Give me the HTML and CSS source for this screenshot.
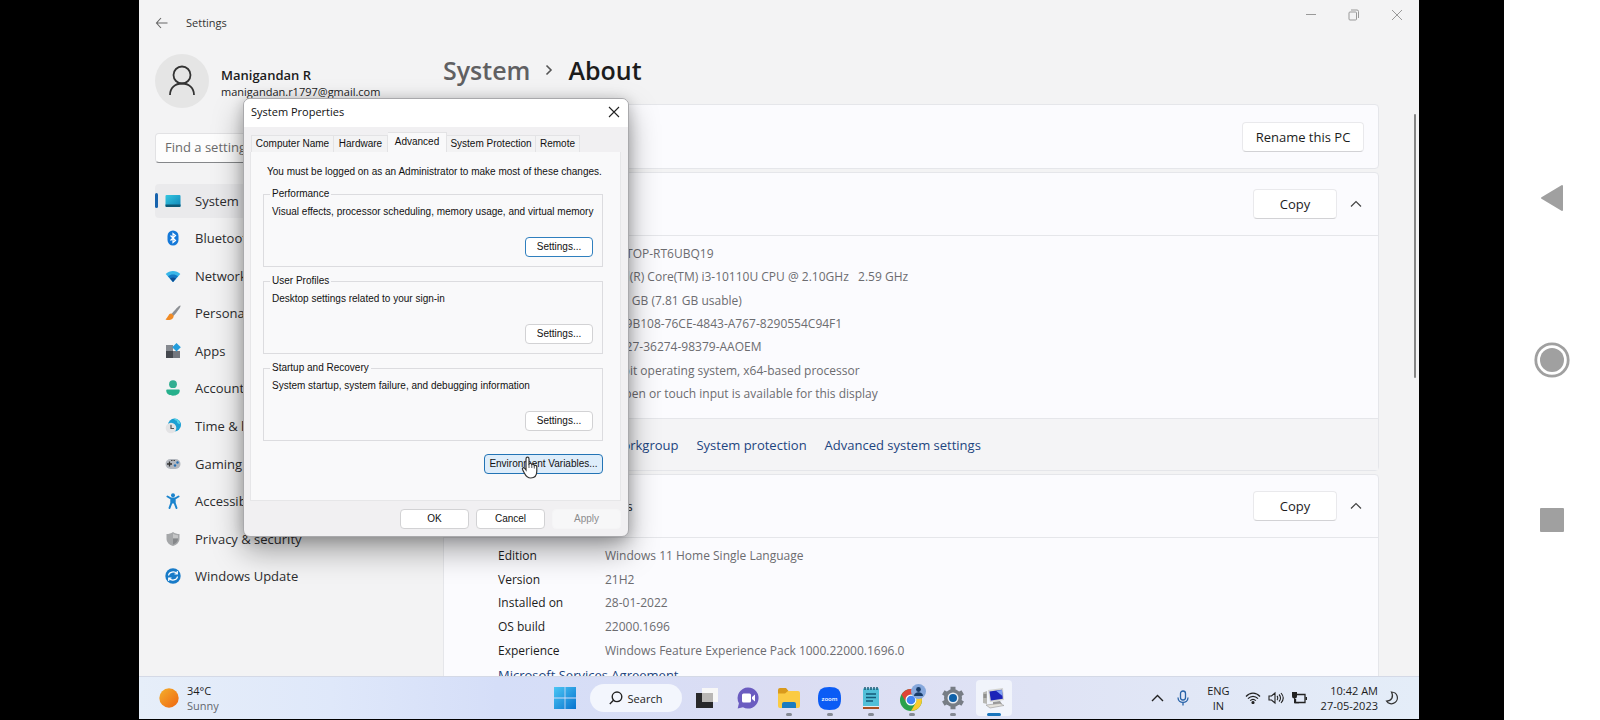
FILE: index.html
```
<!DOCTYPE html>
<html lang="en">
<head>
<meta charset="utf-8">
<title>Settings - System - About</title>
<link rel="stylesheet" href="styles.css">
</head>
<body>
<div class="stage">
  <main class="screen">
    <section class="settings">
      <header class="titlebar">
        <button class="icon-btn" aria-label="Back"><svg width="14" height="12" viewBox="0 0 14 12"><path d="M6 1 1.500 6 6 11M1.500 6H12.500" fill="none" stroke="#666" stroke-width="1.100"/></svg></button>
        <span class="app-name">Settings</span>
        <div class="window-controls">
          <button class="icon-btn" aria-label="Minimize"><svg width="12" height="12" viewBox="0 0 12 12"><path d="M1 5.500h10" stroke="#999"/></svg></button>
          <button class="icon-btn" aria-label="Restore"><svg width="12" height="12" viewBox="0 0 12 12" fill="none" stroke="#999"><rect x="1" y="3" width="7.500" height="8" rx="1"/><path d="M3 1h6a1.500 1.500 0 0 1 1.500 1.500V9"/></svg></button>
          <button class="icon-btn" aria-label="Close"><svg width="12" height="12" viewBox="0 0 12 12"><path d="m1 1 10 10M11 1 1 11" stroke="#999"/></svg></button>
        </div>
      </header>

      <div class="columns">
        <aside class="sidebar">
          <div class="account">
            <div class="avatar"><svg width="28" height="32" viewBox="0 0 28 32" fill="none" stroke="#333" stroke-width="1.800"><circle cx="14" cy="10" r="8.500"/><path d="M2 30c0-7 5-11.500 12-11.500S26 23 26 30"/></svg></div>
            <div>
              <div class="account-name">Manigandan R</div>
              <div class="account-mail">manigandan.r1797@gmail.com</div>
            </div>
          </div>
          <input class="search" type="text" placeholder="Find a setting" aria-label="Find a setting">
          <nav class="nav">
            <a class="nav-item active" href="#"><svg class="nav-icon" viewBox="0 0 16 16"><defs><linearGradient id="sys" x1="0" y1="0" x2="1" y2="1"><stop offset="0" stop-color="#35c7e0"/><stop offset="1" stop-color="#0d84b8"/></linearGradient></defs><rect x="0.500" y="2" width="15" height="12" rx="1" fill="url(#sys)"/><path d="M.5 11.500h15V13a1 1 0 0 1-1 1h-13a1 1 0 0 1-1-1z" fill="#0c5876"/></svg>System</a>
            <a class="nav-item" href="#"><svg class="nav-icon" viewBox="0 0 16 16"><rect x="2.500" y="0.500" width="11" height="15" rx="5.500" fill="#1478d8"/><path d="m5.500 5.500 5 5L8 12.500v-9l2.500 2-5 5" fill="none" stroke="#fff" stroke-width="1.200"/></svg>Bluetooth &amp; devices</a>
            <a class="nav-item" href="#"><svg class="nav-icon" viewBox="0 0 16 16"><path d="M8 14 .7 6C4.500 2 11.500 2 15.300 6z" fill="#38b6e8"/><path d="M8 14 3 8.300c3-2.500 7-2.500 10 0z" fill="#1378c4"/><path d="m8 14-3-3.400c2-1.600 4-1.600 6 0z" fill="#0c4e94"/></svg>Network &amp; internet</a>
            <a class="nav-item" href="#"><svg class="nav-icon" viewBox="0 0 16 16"><path d="M15.500.5c-1.500-.5-5.500 4.500-9 8.500l2 2c3.500-4 7.500-9 7-10.500z" fill="#8c8f94"/><path d="M6.500 8.500C3.500 8 3.500 12 .5 14.500c3 1.300 8 .8 8.200-3.700z" fill="#f08a24"/></svg>Personalization</a>
            <a class="nav-item" href="#"><svg class="nav-icon" viewBox="0 0 16 16"><path d="M1 2h7v6H1z" fill="#85898f"/><path d="M1 8h7v7H1z" fill="#44484e"/><path d="M8 8h7v7H8z" fill="#73777e"/><path d="m11.500 0 4.300 4.200-4.300 4.300-4.300-4.300z" fill="#249ddb"/></svg>Apps</a>
            <a class="nav-item" href="#"><svg class="nav-icon" viewBox="0 0 16 16"><circle cx="8" cy="4.200" r="3.900" fill="#32ae91"/><path d="M2 9.500h12c.8 0 .8 1 .7 1.800-.4 3-3.700 4.400-6.700 4.400s-6.300-1.400-6.700-4.400c-.1-.8-.1-1.800.7-1.800z" fill="#26b08c"/></svg>Accounts</a>
            <a class="nav-item" href="#"><svg class="nav-icon" viewBox="0 0 16 16"><circle cx="9.500" cy="7" r="6.500" fill="#1a9fd3"/><path d="M9 1c3-1 6 2 6 5-2 0-3-1-3-2.500S10 3 9 1z" fill="#55d2e5"/><circle cx="6" cy="10" r="5.300" fill="#e3e3e5"/><path d="M6 6.800V10.500h3" fill="none" stroke="#555" stroke-width="1.200"/></svg>Time &amp; language</a>
            <a class="nav-item" href="#"><svg class="nav-icon" viewBox="0 0 16 16"><rect x=".5" y="3" width="15" height="10" rx="5" fill="#b3b7be"/><path d="M4.500 5.500v5M2 8h5" stroke="#333" stroke-width="1.300"/><circle cx="10" cy="9.500" r="1.200" fill="#246fb5"/><circle cx="12.500" cy="6.500" r="1.200" fill="#246fb5"/><path d="M6 4.500h1.500M8.500 4.500H10" stroke="#444"/></svg>Gaming</a>
            <a class="nav-item" href="#"><svg class="nav-icon" viewBox="0 0 16 16"><circle cx="8" cy="2.200" r="2" fill="#1c84cd"/><path d="M2.500 3.500 6 5.500h4l3.500-2M8 5.500v4M6.300 5.500v4.500L4.500 15M9.700 5.500v4.500l1.800 5" fill="none" stroke="#1c84cd" stroke-width="2" stroke-linecap="round"/></svg>Accessibility</a>
            <a class="nav-item" href="#"><svg class="nav-icon" viewBox="0 0 16 16"><path d="M8 1c2 1.500 4 2 6.500 2v4.500c0 4-3 6.500-6.500 7.500C4.500 14 1.500 11.500 1.500 7.500V3C4 3 6 2.500 8 1z" fill="#a5a7a9"/><path d="M8 2.500c1.500 1 3 1.500 5 1.700V7.500H8z" fill="#c4c5c6"/><path d="M8 7.500h5c0 3-2 5-5 6z" fill="#85878a"/></svg>Privacy &amp; security</a>
            <a class="nav-item" href="#"><svg class="nav-icon" viewBox="0 0 16 16"><circle cx="8" cy="8" r="7.700" fill="#187bc8"/><path d="M3.500 7.500C4 3.500 9.500 3 12 5.500M12.300 3v3H9.500M12.500 8.500C12 12.500 6.500 13 4 10.500M3.700 13v-3h2.800" fill="none" stroke="#fff" stroke-width="1.200"/></svg>Windows Update</a>
          </nav>
        </aside>

        <div class="content">
          <h1 class="crumbs"><span class="crumb-parent">System</span><svg width="8" height="12" viewBox="0 0 8 12"><path d="m1.500 1.500 4.500 4.500-4.500 4.500" fill="none" stroke="#555" stroke-width="1.600"/></svg><span>About</span></h1>

          <section class="card">
            <div class="card-head"><span>LAPTOP-RT6UBQ19</span><button class="btn rename">Rename this PC</button></div>
          </section>

          <section class="card">
            <div class="card-head ruled"><span class="card-title">Device specifications</span><button class="btn copy">Copy</button><button class="icon-btn chevron" aria-label="Collapse"><svg width="12" height="8" viewBox="0 0 12 8"><path d="m1 6.500 5-5 5 5" fill="none" stroke="#444" stroke-width="1.200"/></svg></button></div>
            <dl class="specs device">
              <dt>Device name</dt><dd>LAPTOP-RT6UBQ19</dd>
              <dt>Processor</dt><dd>Intel(R) Core(TM) i3-10110U CPU @ 2.10GHz &nbsp; 2.59 GHz</dd>
              <dt>Installed RAM</dt><dd>8.00 GB (7.81 GB usable)</dd>
              <dt>Device ID</dt><dd>0009B108-76CE-4843-A767-8290554C94F1</dd>
              <dt>Product ID</dt><dd>00327-36274-98379-AAOEM</dd>
              <dt>System type</dt><dd>64-bit operating system, x64-based processor</dd>
              <dt>Pen and touch</dt><dd>No pen or touch input is available for this display</dd>
            </dl>
            <div class="related"><span>Related links</span><a href="#">Domain or workgroup</a><a href="#">System protection</a><a href="#">Advanced system settings</a></div>
          </section>

          <section class="card">
            <div class="card-head ruled"><span class="card-title">Windows specifications</span><button class="btn copy">Copy</button><button class="icon-btn chevron" aria-label="Collapse"><svg width="12" height="8" viewBox="0 0 12 8"><path d="m1 6.500 5-5 5 5" fill="none" stroke="#444" stroke-width="1.200"/></svg></button></div>
            <dl class="specs windows">
              <dt>Edition</dt><dd>Windows 11 Home Single Language</dd>
              <dt>Version</dt><dd>21H2</dd>
              <dt>Installed on</dt><dd>28-01-2022</dd>
              <dt>OS build</dt><dd>22000.1696</dd>
              <dt>Experience</dt><dd>Windows Feature Experience Pack 1000.22000.1696.0</dd>
            </dl>
            <a class="agreement" href="#">Microsoft Services Agreement</a>
          </section>
          <div class="scroll-thumb"></div>
        </div>
      </div>
    </section>

    <footer class="taskbar">
      <div class="weather">
        <svg width="20" height="20" viewBox="0 0 20 20"><defs><linearGradient id="sun" x1="0" y1="0" x2="1" y2="1"><stop offset="0" stop-color="#f5b02c"/><stop offset="1" stop-color="#ee6510"/></linearGradient></defs><circle cx="10" cy="10" r="9.700" fill="url(#sun)"/></svg>
        <div><div>34°C</div><div class="muted">Sunny</div></div>
      </div>
      <div class="apps">
        <button class="app" aria-label="Start"><svg width="22" height="22" viewBox="0 0 22 22"><defs><linearGradient id="win" x1="0" y1="0" x2="1" y2="1"><stop offset="0" stop-color="#4cc6f4"/><stop offset="1" stop-color="#0673cf"/></linearGradient></defs><path d="M0 0h10.600v10.600H0zM11.400 0H22v10.600H11.400zM0 11.400h10.600V22H0zM11.400 11.400H22V22H11.400z" fill="url(#win)"/></svg></button>
        <button class="search-pill"><svg width="14" height="14" viewBox="0 0 14 14" fill="none" stroke="#222" stroke-width="1.400"><circle cx="8" cy="5.800" r="4.800"/><path d="M4.500 9.300.8 13"/></svg>Search</button>
        <button class="app" aria-label="Task view"><svg width="24" height="22" viewBox="0 0 24 22"><path d="M1 6h17v15H1z" fill="#28282a"/><path d="M7 1h16v14H7z" fill="#f7f7f7"/><path d="M7 6h11v9H7z" fill="#b9b7b5"/></svg></button>
        <button class="app" aria-label="Chat"><svg width="22" height="22" viewBox="0 0 22 22"><path d="M11 .5a10.500 10.500 0 1 1-5 19.700L.7 21.500l1.200-5.300A10.500 10.500 0 0 1 11 .5z" fill="#6b5cc0"/><rect x="5" y="6.500" width="9" height="9" rx="1.500" fill="#fff"/><path d="m15 10 3-2.500v7L15 12z" fill="#fff"/></svg></button>
        <button class="app running" aria-label="File Explorer"><svg width="24" height="22" viewBox="0 0 24 22"><path d="M1 3a2 2 0 0 1 2-2h6l2.500 3H21v5H1z" fill="#d99a1c"/><path d="M1 6.500h7L11 4h10a2 2 0 0 1 2 2v13a2 2 0 0 1-2 2H3a2 2 0 0 1-2-2z" fill="#fbcb44"/><path d="M5 21v-4a2 2 0 0 1 2-2h10a2 2 0 0 1 2 2v4z" fill="#1a7cc0"/></svg></button>
        <button class="app running" aria-label="Zoom"><svg width="23" height="23" viewBox="0 0 23 23"><path d="M11.500 0C20 0 23 3 23 11.500S20 23 11.500 23 0 20 0 11.500 3 0 11.500 0z" fill="#0b5cf5"/><text x="11.500" y="14" class="zoom-word">zoom</text></svg></button>
        <button class="app running" aria-label="Notepad"><svg width="18" height="24" viewBox="0 0 18 24"><path d="M1 2.500h16V20H1z" fill="#51bfd8"/><path d="M1 21h16v2H1z" fill="#a84f22"/><path d="M1 20h16v1H1z" fill="#e9eef0"/><path d="M3 1v3M6 1v3M9 1v3M12 1v3M15 1v3" stroke="#1b5d75" stroke-width="1.500"/><path d="M4 8h10M4 11.500h10M4 15h7" stroke="#145a78" stroke-width="1.500"/></svg></button>
        <button class="app running" aria-label="Chrome"><svg width="28" height="28" viewBox="0 0 28 28"><circle cx="13" cy="16" r="11" fill="#2aa14c"/><path d="M3.500 10.500A11 11 0 0 1 22.500 10.500H13a5.500 5.500 0 0 0-5 7.500z" fill="#df4437"/><path d="M22.500 10.500A11 11 0 0 1 13 27l4.800-8.300a5.500 5.500 0 0 0-4.800-8.200z" fill="#f9cb2e"/><circle cx="13" cy="16" r="5.500" fill="#fff"/><circle cx="13" cy="16" r="4.300" fill="#4285f4"/><circle cx="20.500" cy="7.500" r="7.500" fill="#86a8dc"/><circle cx="20.500" cy="5.500" r="2.400" fill="#173b68"/><path d="M16 12c0-5 9-5 9 0z" fill="#173b68"/></svg></button>
        <button class="app running" aria-label="Settings"><svg width="24" height="24" viewBox="0 0 24 24"><circle cx="12" cy="12" r="9" fill="#777d85"/><g stroke="#777d85" stroke-width="5"><path d="M12 .8v22.400M2.300 6.400l19.400 11.200M2.300 17.600 21.700 6.400"/></g><circle cx="12" cy="12" r="5.500" fill="#e9eef5"/><circle cx="12" cy="12" r="4" fill="#0f61a9"/></svg></button>
        <button class="app running current" aria-label="System Properties"><svg width="24" height="22" viewBox="0 0 24 22"><path d="M1 5.500 5 4v13l-4-1z" fill="#b8b8b4"/><path d="M1.500 8h3M1.500 10h3" stroke="#666"/><path d="m6 3 15-2 1 12-14 2z" fill="#d4d4d0"/><path d="m7.500 4.500 12.500-1.700.8 9-12 1.600z" fill="#1c23b8"/><path d="m14 3.700 6-.8.5 6z" fill="#7fa0f2"/><path d="m11 15 7-1 2 3-9 1z" fill="#999"/><path d="m4 18 14-1.500 4 2L8 21z" fill="#e4e2dc" stroke="#999" stroke-width=".6"/></svg></button>
      </div>
      <div class="tray">
        <svg width="13" height="8" viewBox="0 0 13 8"><path d="m1 7 5.500-5.500L12 7" fill="none" stroke="#222" stroke-width="1.400"/></svg>
        <svg class="mic" width="12" height="16" viewBox="0 0 12 16" fill="none" stroke="#2762a8" stroke-width="1.300"><rect x="3.500" y="1" width="5" height="9" rx="2.500"/><path d="M1 7.500c0 6.500 10 6.500 10 0M6 12.300V15.500"/></svg>
        <div class="lang"><div>ENG</div><div>IN</div></div>
        <svg width="16" height="12" viewBox="0 0 16 12" fill="none" stroke="#222" stroke-width="1.200"><path d="M1 4.500c4-4.500 10-4.500 14 0M3 6.700c3-3.200 7-3.200 10 0M5.200 8.700c1.800-1.800 3.800-1.800 5.600 0"/><circle cx="8" cy="10.500" r="1" fill="#222"/></svg>
        <svg width="16" height="14" viewBox="0 0 16 14" fill="none" stroke="#222" stroke-width="1.100"><path d="M1 5h2.500L7 2v10L3.500 9H1zM9 5c1 1 1 3 0 4M11 3.500c2 2 2 5 0 7M13 2c2.700 3 2.700 7 0 10"/></svg>
        <svg width="16" height="14" viewBox="0 0 16 14"><path d="M6 3.500h8v8H4.500V8" fill="none" stroke="#222" stroke-width="1.300"/><path d="M14.500 6H16v3h-1.500z" fill="#222"/><path d="M1 1h5v4a2.500 2.500 0 0 1-5 0zM3 6h1.200v5H8v1.200H3z" fill="#222"/></svg>
        <div class="clock"><div>10:42 AM</div><div>27-05-2023</div></div>
        <svg width="14" height="14" viewBox="0 0 14 14"><path d="M6.500 1c6.500.3 7.500 7.500 3.500 10.500-3 2.300-7 1.300-8.500-1.500C6.500 10 9 6 6.500 1z" fill="none" stroke="#333" stroke-width="1.200"/></svg>
      </div>
    </footer>

    <section class="dialog" role="dialog" aria-label="System Properties">
      <header class="dialog-title"><span>System Properties</span><button class="icon-btn" aria-label="Close dialog"><svg width="12" height="12" viewBox="0 0 12 12"><path d="m1 1 10 10M11 1 1 11" stroke="#222" stroke-width="1.100"/></svg></button></header>
      <div class="tabs" role="tablist">
        <button class="tab t1" role="tab">Computer Name</button><button class="tab t2" role="tab">Hardware</button><button class="tab t3 selected" role="tab" aria-selected="true">Advanced</button><button class="tab t4" role="tab">System Protection</button><button class="tab t5" role="tab">Remote</button>
      </div>
      <div class="panel">
        <p class="notice">You must be logged on as an Administrator to make most of these changes.</p>
        <fieldset class="group"><legend>Performance</legend><p>Visual effects, processor scheduling, memory usage, and virtual memory</p><button class="dbtn small focus">Settings...</button></fieldset>
        <fieldset class="group"><legend>User Profiles</legend><p>Desktop settings related to your sign-in</p><button class="dbtn small">Settings...</button></fieldset>
        <fieldset class="group"><legend>Startup and Recovery</legend><p>System startup, system failure, and debugging information</p><button class="dbtn small">Settings...</button></fieldset>
        <button class="dbtn env">Environment Variables...</button>
      </div>
      <div class="dialog-foot"><button class="dbtn">OK</button><button class="dbtn">Cancel</button><button class="dbtn" disabled>Apply</button></div>
      <svg class="cursor" width="18" height="24" viewBox="0 0 18 24"><path d="M5 14V3c0-2.400 3-2.400 3 0v5c1-1 2.600-.6 2.800.6 1-.7 2.400-.2 2.500 1 1.200-.6 2.500.1 2.500 1.500V15c0 4-2 7-6 7-3.500 0-5-2-6.500-5L1.500 13.500C.9 12 2.800 11 3.800 12.400z" fill="#fff" stroke="#333" stroke-width="1.200"/><path d="M8 8v4M10.800 9v3M13.300 10v2.500" stroke="#555"/></svg>
    </section>
  </main>
  <nav class="device-nav" aria-label="Device navigation">
    <button class="icon-btn" aria-label="Back to previous"><svg width="24" height="28" viewBox="0 0 24 28"><path d="M22 2v24L2 14z" fill="#a0a0a0" stroke="#a0a0a0" stroke-width="2" stroke-linejoin="round"/></svg></button>
    <button class="icon-btn" aria-label="Home"><svg width="36" height="36" viewBox="0 0 36 36"><circle cx="18" cy="18" r="16.200" fill="none" stroke="#a0a0a0" stroke-width="2.800"/><circle cx="18" cy="18" r="12" fill="#a0a0a0"/></svg></button>
    <button class="icon-btn" aria-label="Recent apps"><svg width="24" height="24" viewBox="0 0 24 24"><rect width="24" height="24" rx="1" fill="#a0a0a0"/></svg></button>
  </nav>
</div>
</body>
</html>
```

FILE: styles.css
```
* { box-sizing: border-box; }
body {
  margin: 0;
  background: #000;
  color: #1c1c1c;
  font: 13px/18px "Open Sans", "Noto Sans", sans-serif;
}
button, input { font: inherit; color: inherit; }
p, dl, dd, h1 { margin: 0; }
a { color: #1d4580; text-decoration: none; }
svg { display: block; flex: none; }

.stage {
  display: grid;
  grid-template-columns: 139px 1fr 85px 96px;
  height: 100vh;
}
.screen {
  grid-column: 2;
  position: relative;
  display: grid;
  grid-template-rows: minmax(0, 1fr) 43px;
  padding-bottom: 1px;
  overflow: hidden;
}
.icon-btn {
  display: grid;
  place-items: center;
  padding: 0;
  border: 0;
  background: none;
}

/* Settings window */
.settings {
  overflow: hidden;
  background: #f3f3f4;
}
.titlebar {
  display: flex;
  align-items: flex-start;
  padding: 14px 16px 0;
  height: 46px;
}
.titlebar > .icon-btn { margin-top: 3px; }
.app-name { margin-left: 17px; font-size: 11px; color: #333; }
.window-controls { display: flex; gap: 31px; margin-left: auto; margin-top: -5px; }
.columns { display: grid; grid-template-columns: 304px 1fr; }

.sidebar { padding: 8px 8px 0 16px; }
.account { display: flex; align-items: center; gap: 12px; }
.avatar {
  display: grid;
  place-items: center;
  width: 54px;
  height: 54px;
  border-radius: 50%;
  background: #e5e5e5;
}
.account-name { padding-top: 5px; font-weight: 600; line-height: 17px; }
.account-mail { font-size: 11px; line-height: 16px; }
.search {
  width: 100%;
  height: 30px;
  margin-top: 25px;
  padding: 0 9px 2px;
  border: 1px solid #e2e2e4;
  border-bottom: 1px solid #85878a;
  border-radius: 4px;
  background: #fdfdfd;
}
.search::placeholder { color: #6b6b6b; opacity: 1; }
.nav { display: grid; grid-auto-rows: 1fr; height: 413px; margin-top: 19px; }
.nav-item {
  position: relative;
  display: flex;
  align-items: center;
  gap: 14px;
  margin: 2px 0;
  padding-left: 10px;
  border-radius: 4px;
  color: #2c2c2e;
}
.nav-icon { width: 16px; height: 16px; }
.nav-item.active { background: #eaeaec; }
.nav-item.active::before {
  content: "";
  position: absolute;
  left: 0;
  top: 9px;
  width: 3px;
  height: 15px;
  border-radius: 2px;
  background: #1763ad;
}

.content { position: relative; padding: 0 40px 0 0; }
.crumbs {
  display: flex;
  align-items: center;
  gap: 15px;
  height: 58px;
  padding-bottom: 10px;
  font-size: 25px;
  line-height: 34px;
  font-weight: 600;
}
.crumb-parent { color: #606062; }
.card {
  margin-bottom: 3px;
  border: 1px solid #e5e6ea;
  border-radius: 4px;
  background: #fbfbfe;
}
.card-head {
  display: flex;
  align-items: center;
  height: 63px;
  padding: 0 14px 0 54px;
}
.card-head.ruled { padding: 0 10px 0 48px; border-bottom: 1px solid #e5e6ea; }
.btn {
  height: 30px;
  margin-left: auto;
  border: 1px solid #e9e9ec;
  border-bottom-color: #d2d2d5;
  border-radius: 4px;
  background: #fff;
}
.rename { width: 122px; }
.copy { width: 84px; }
.chevron { width: 24px; height: 24px; margin-left: 7px; }
.specs {
  display: grid;
  grid-template-columns: 107px 1fr;
  grid-auto-rows: 1fr;
  align-items: center;
  padding-left: 54px;
  font-size: 12px;
}
.specs dd { color: #6c6c70; }
.device { height: 182px; padding-top: 6px; padding-bottom: 12px; }
.windows { height: 125px; padding-top: 6px; }
.related {
  display: flex;
  align-items: center;
  height: 52px;
  padding-left: 12px;
  border-top: 1px solid #e5e6ea;
  background: #f4f4f6;
}
.related a { margin-left: 18px; }
.related span + a { margin-left: 12px; }
.agreement { display: block; padding: 3px 54px 20px; }
.scroll-thumb {
  position: absolute;
  right: 3px;
  top: 68px;
  width: 2px;
  height: 264px;
  border-radius: 1px;
  background: #858585;
}

/* Taskbar */
.taskbar {
  display: grid;
  grid-template-columns: 1fr auto 1fr;
  align-items: center;
  padding: 0 20px;
  border-top: 1px solid #d4d9e6;
  background: linear-gradient(90deg, #e6eef9 0, #dfe8fa 15%, #d5def8 28%, #dbddf3 50%, #dfe3f5 70%, #e4edf8 100%);
  font-size: 11px;
  line-height: 15px;
}
.weather { display: flex; align-items: center; gap: 8px; }
.muted { color: #63676e; }
.apps { display: flex; align-items: center; gap: 5px; }
.app {
  position: relative;
  display: grid;
  place-items: center;
  width: 36px;
  height: 36px;
  padding: 0;
  border: 0;
  border-radius: 4px;
  background: none;
}
.search-pill {
  display: flex;
  align-items: center;
  justify-content: center;
  gap: 5px;
  width: 92px;
  height: 28px;
  margin: 0 2px;
  border: 0;
  border-radius: 14px;
  background: #f3f6fd;
}
.running::after {
  content: "";
  position: absolute;
  left: 15px;
  bottom: 0;
  width: 6px;
  height: 3px;
  border-radius: 2px;
  background: #858a94;
}
.current { background: #f1f4fb; }
.current::after { left: 11px; width: 14px; background: #1975bd; }
.zoom-word { font: 600 6px "Open Sans", sans-serif; fill: #fff; text-anchor: middle; }
.tray { display: flex; align-items: center; justify-content: flex-end; gap: 7px; }
.mic { margin-left: 6px; }
.lang { margin: 0 8px 0 11px; text-align: center; }
.clock { margin-left: 7px; text-align: right; }

/* System Properties dialog */
.dialog {
  position: absolute;
  left: 104px;
  top: 98px;
  width: 386px;
  padding: 0 7px 7px 6px;
  border: 1px solid #a9a9ac;
  border-radius: 7px;
  background: #f1f0f2;
  box-shadow: 0 14px 30px rgba(0, 0, 0, 0.35), 0 2px 14px rgba(0, 0, 0, 0.2);
  font: 10px/14px "Liberation Sans", Arial, sans-serif;
  color: #111;
}
.dialog-title {
  display: flex;
  align-items: center;
  justify-content: space-between;
  height: 28px;
  margin: 0 -7px 0 -6px;
  padding: 0 8px 2px 7px;
  border-radius: 6px 6px 0 0;
  background: #fff;
  font: 11px/16px "Open Sans", "Noto Sans", sans-serif;
}
.tabs { display: flex; align-items: flex-end; height: 25px; padding-left: 1px; }
.tab {
  height: 17px;
  padding: 0;
  border: 1px solid #e3e3e5;
  border-bottom: 0;
  border-left-width: 0;
  background: #f3f3f4;
  white-space: nowrap;
}
.t1 { width: 83px; border-left-width: 1px; }
.t2 { width: 54px; }
.t3 { width: 59px; }
.t4 { width: 89px; }
.t5 { width: 44px; }
.tab.selected { height: 20px; padding-bottom: 2px; background: #f9f9fa; }
.panel {
  display: flex;
  flex-direction: column;
  height: 349px;
  padding: 13px 17px 0 12px;
  border: 1px solid #e6e6e8;
  border-top: 0;
  background: #f9f9fa;
}
.notice { padding-left: 4px; white-space: nowrap; }
.group {
  height: 80px;
  min-width: 0;
  margin: 8px 0 0;
  padding: 4px 9px 0 8px;
  border: 1px solid #dcdcdf;
}
.group + .group { margin-top: 7px; }
.group legend { padding: 0 2px; margin-left: -2px; }
.group p { white-space: nowrap; }
.dbtn {
  width: 69px;
  height: 20px;
  padding: 0;
  border: 1px solid #d2d2d4;
  border-radius: 4px;
  background: #fff;
}
.small { display: block; width: 68px; margin: 18px 0 0 auto; }
.dbtn.focus { border-color: #2f7fbe; }
.env {
  flex: none;
  width: 119px;
  margin: 13px 0 0 auto;
  border-color: #2374b5;
  background: #deedfa;
}
.dialog-foot { display: flex; justify-content: flex-end; gap: 7px; padding-top: 8px; }
.dbtn:disabled { border-color: #f5f5f6; background: #f7f7f8; color: #8c8c8e; }
.cursor { position: absolute; left: 277px; top: 357px; }

/* Device navigation strip */
.device-nav {
  grid-column: 4;
  display: flex;
  flex-direction: column;
  align-items: center;
  justify-content: center;
  gap: 130px;
  padding: 0 1px 4px 0;
  background: #fff;
}
```
